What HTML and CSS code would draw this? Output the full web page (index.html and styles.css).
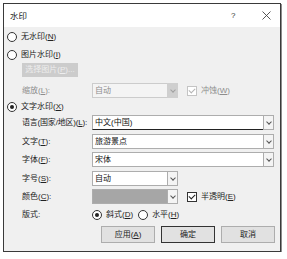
FILE: index.html
```html
<!DOCTYPE html>
<html lang="zh-CN">
<head>
    <meta charset="UTF-8">
    <meta name="viewport" content="width=device-width, initial-scale=1.0">
    <title>水印</title>
    <link rel="stylesheet" href="styles.css">
</head>
<body>
    <div class="dialog">
        <div class="titlebar">
            <span class="title">水印</span>
            <span class="help">?</span>
            <span class="close">
                <svg width="9" height="9" viewBox="0 0 9 9"><path d="M0.5 0.5 L8.5 8.5 M8.5 0.5 L0.5 8.5" stroke="#444" stroke-width="0.9" fill="none"/></svg>
            </span>
        </div>
        <div class="content">
            <div class="row opt r-none"><span class="radio"></span>无水印(<u>N</u>)</div>
            <div class="row opt r-pic"><span class="radio"></span>图片水印(<u>I</u>)</div>
            <div class="row indent r-btn"><span class="btn-disabled">选择图片(<u>P</u>)...</span></div>
            <div class="row indent r-scale">
                <span class="label disabled">缩放(<u>L</u>):</span>
                <div class="combo short disabled"><span class="field">自动</span><span class="arrow"></span></div>
                <span class="check disabled checked"></span><span class="disabled">冲蚀(<u>W</u>)</span>
            </div>
            <div class="row opt r-text"><span class="radio checked"></span>文字水印(<u>X</u>)</div>
            <div class="row indent r-lang">
                <span class="label long">语言(国家/地区)(<u>L</u>):</span>
                <div class="combo focus"><span class="field">中文(中国)</span><span class="arrow"></span></div>
            </div>
            <div class="row indent r-words">
                <span class="label">文字(<u>T</u>):</span>
                <div class="combo"><span class="field">旅游景点</span><span class="arrow"></span></div>
            </div>
            <div class="row indent r-font">
                <span class="label">字体(<u>F</u>):</span>
                <div class="combo"><span class="field">宋体</span><span class="arrow"></span></div>
            </div>
            <div class="row indent r-size">
                <span class="label">字号(<u>S</u>):</span>
                <div class="combo short"><span class="field">自动</span><span class="arrow"></span></div>
            </div>
            <div class="row indent r-color">
                <span class="label">颜色(<u>C</u>):</span>
                <div class="combo short color"><span class="field"></span><span class="arrow"></span></div>
                <span class="check checked"></span><span>半透明(<u>E</u>)</span>
            </div>
            <div class="row indent r-layout">
                <span class="label">版式:</span>
                <span class="radio checked"></span><span class="radio-text">斜式(<u>D</u>)</span>
                <span class="radio"></span><span class="radio-text">水平(<u>H</u>)</span>
            </div>
            <div class="buttons">
                <span class="btn">应用(<u>A</u>)</span>
                <span class="btn default">确定</span>
                <span class="btn">取消</span>
            </div>
        </div>
    </div>
</body>
</html>
```

FILE: styles.css
```css
body {
    margin: 0;
    background-color: #ffffff;
    font-family: "Liberation Sans", "Noto Sans CJK SC", sans-serif;
    font-size: 8px;
    line-height: 12px;
    color: #222222;
    white-space: nowrap;
}
u {
    text-decoration: underline;
    text-underline-offset: 1px;
}
.dialog {
    margin: 3px 0 0 3px;
    width: 276px;
    height: 247px;
    border: 1px solid #3a3a3a;
    box-shadow: 1px 1px 0 #8c8c8c;
    background-color: #f0f0f0;
    display: flex;
    flex-direction: column;
}
.titlebar {
    height: 23px;
    background-color: #ffffff;
    display: flex;
    align-items: center;
    padding-left: 6px;
    flex-shrink: 0;
}
.title {
    flex: 1;
    font-size: 8.5px;
}
.help {
    width: 10px;
    margin-right: 21px;
    color: #333;
}
.close {
    display: flex;
    margin-right: 9px;
}
.content {
    padding: 0 6px 0 3px;
    display: flex;
    flex-direction: column;
}
.row {
    display: flex;
    align-items: center;
    height: 14px;
    flex-shrink: 0;
}
.indent {
    padding-left: 15px;
}
.r-none { margin-top: 3px; }
.r-pic { margin-top: 4px; }
.r-btn { margin-top: 1px; }
.r-scale { margin-top: 6px; height: 15px; }
.r-text { margin-top: 2px; }
.r-lang { margin-top: 1px; height: 15px; }
.r-words { margin-top: 4px; height: 15px; }
.r-font { margin-top: 3px; height: 15px; }
.r-size { margin-top: 4px; height: 15px; }
.r-color { margin-top: 3px; height: 15px; }
.r-layout { margin-top: 4px; }

.radio {
    width: 8px;
    height: 8px;
    border: 1px solid #333;
    border-radius: 50%;
    background-color: #fff;
    margin-right: 4px;
    display: flex;
    align-items: center;
    justify-content: center;
    flex-shrink: 0;
}
.radio.checked::after {
    content: "";
    width: 4px;
    height: 4px;
    border-radius: 50%;
    background-color: #222;
}
.radio-text {
    margin-right: 5px;
}
.btn-disabled {
    width: 56px;
    height: 14px;
    background-color: #cccccc;
    color: #eeeeee;
    display: flex;
    align-items: center;
    justify-content: center;
}
.label {
    width: 70px;
    min-width: 70px;
    max-width: 70px;
    flex-shrink: 0;
}
.label.long {
    letter-spacing: -0.2px;
}
.disabled {
    color: #8d8d8d;
}
.combo {
    flex: 1;
    height: 15px;
    display: flex;
    box-sizing: border-box;
}
.combo.short {
    flex: none;
    width: 86px;
}
.field {
    flex: 1;
    background-color: #fff;
    border: 1px solid #adadad;
    border-right: none;
    padding-left: 2px;
    display: flex;
    align-items: center;
    color: #111;
}
.combo.focus .field {
    border-bottom: 1px solid #222;
}
.combo.disabled .field {
    background-color: #f4f4f4;
    border-color: #cccccc;
    color: #8d8d8d;
}
.combo.color .field {
    background-color: #a6a6a6;
}
.arrow {
    width: 9px;
    border: 1px solid #adadad;
    background-color: #f4f4f4;
    position: relative;
}
.arrow::after {
    content: "";
    position: absolute;
    left: 3px;
    top: 4px;
    width: 3px;
    height: 3px;
    border-right: 1px solid #555;
    border-bottom: 1px solid #555;
    transform: rotate(45deg);
}
.combo.disabled .arrow {
    background-color: #cfcfcf;
    border-color: #cfcfcf;
}
.combo.disabled .arrow::after {
    border-color: #a0a0a0;
}
.check {
    width: 8px;
    height: 8px;
    border: 1px solid #333;
    background-color: #fff;
    margin: 0 4px 0 9px;
    position: relative;
    flex-shrink: 0;
}
.check.checked::after {
    content: "";
    position: absolute;
    left: 2px;
    top: 0;
    width: 3px;
    height: 5px;
    border-right: 1px solid #222;
    border-bottom: 1px solid #222;
    transform: rotate(45deg);
}
.check.disabled {
    border-color: #c4c4c4;
}
.check.disabled.checked::after {
    border-color: #b4b4b4;
}
.buttons {
    display: flex;
    justify-content: flex-end;
    gap: 6px;
    margin-top: 4px;
    margin-right: -1px;
}
.btn {
    width: 52px;
    height: 15px;
    border: 1px solid #adadad;
    background-color: #e1e1e1;
    display: flex;
    align-items: center;
    justify-content: center;
}
.btn.default {
    border-color: #333;
}
```
